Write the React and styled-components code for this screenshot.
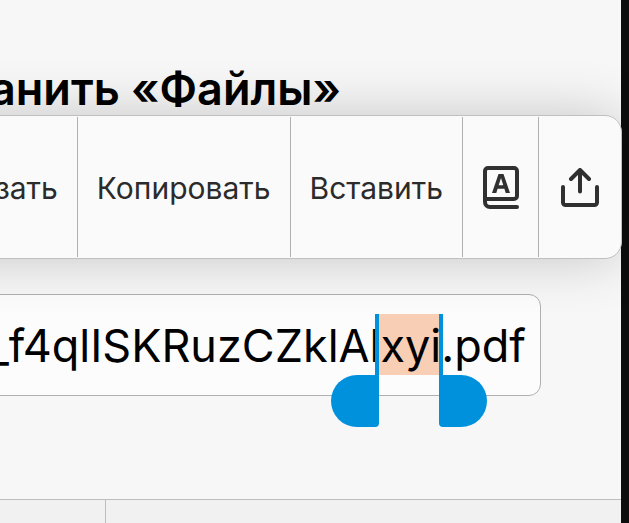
import { useEffect, useRef } from 'react';
import styled, { createGlobalStyle } from 'styled-components';

const GlobalStyle = createGlobalStyle`
  * {
    box-sizing: border-box;
  }

  body {
    margin: 0;
    background-color: #0d0d0d;
    font-family: 'Inter', 'Liberation Sans', sans-serif;
    overflow: hidden;
  }
`;

const Screen = styled.div`
  position: relative;
  min-height: 100vh;
  padding-right: 8px;
  display: flex;
  overflow: hidden;
`;

const Dialog = styled.main`
  flex: 1;
  min-width: 0;
  display: flex;
  flex-direction: column;
  overflow: hidden;
  background-color: #f7f7f7;
`;

const Content = styled.div`
  flex: 1;
  display: flex;
  flex-direction: column;
  align-items: flex-end;
  gap: 176px;
  padding: 60px 80px 0 0;
`;

const Title = styled.h1`
  margin: 0;
  padding-right: 200px;
  font-size: 45px;
  line-height: 58px;
  font-weight: 600;
  color: #000000;
  white-space: nowrap;
`;

const Field = styled.div`
  position: relative;
  width: calc(100% + 80px);
  border: 1px solid #b0b0b0;
  border-radius: 12px;
  background-color: #fcfcfc;
`;

const FileName = styled.input`
  position: relative;
  display: block;
  width: 100%;
  height: 100px;
  padding: 20px 14px;
  border: none;
  outline: none;
  background: none;
  font-family: inherit;
  font-size: 45px;
  line-height: 60px;
  text-align: right;
  color: #000000;
  caret-color: transparent;

  &::selection {
    background-color: transparent;
    color: #000000;
  }
`;

const Highlight = styled.span`
  position: absolute;
  top: 19px;
  right: 101px;
  width: 60px;
  height: 61px;
  background-color: #f8ceb5;
`;

const Handle = styled.span`
  position: absolute;
  top: 19px;
  right: ${({ $side }) => ($side === 'start' ? '161px' : '53px')};
  width: 48px;
  height: 113px;
  display: flex;
  flex-direction: column;
  align-items: ${({ $side }) => ($side === 'start' ? 'flex-end' : 'flex-start')};

  &::before {
    content: '';
    width: 4px;
    height: 61px;
    background-color: #0091dd;
  }

  &::after {
    content: '';
    width: 48px;
    height: 52px;
    border-radius: ${({ $side }) =>
      $side === 'start' ? '26px 0 4px 26px' : '0 26px 26px 4px'};
    background-color: #0091dd;
  }
`;

const Footer = styled.footer`
  display: flex;
  height: 24px;
  border-top: 1px solid #bdbdbd;
  background-color: #f1f1f1;
`;

const FooterCell = styled.div`
  width: 106px;
  border-right: 1px solid #bdbdbd;
`;

const Menu = styled.div`
  position: absolute;
  top: 115px;
  right: 7px;
  z-index: 1;
  display: flex;
  padding: 1px 0;
  height: 144px;
  border: 1px solid #c0c0c0;
  border-radius: 17px;
  background-color: #fafafa;
  box-shadow: 0 0 56px rgba(0, 0, 0, 0.2);
`;

const MenuButton = styled.button`
  display: flex;
  align-items: center;
  justify-content: center;
  padding: 2px 19px 0;
  border: none;
  border-left: 1px solid #b0b0b0;
  background: none;
  font-family: inherit;
  font-size: 30px;
  line-height: 40px;
  color: #2b2b2b;
  white-space: nowrap;
`;

const IconButton = styled(MenuButton)`
  width: ${({ $width }) => $width};
  padding: 0;
`;

const Icon = styled.svg`
  flex: none;
  display: block;
`;

function DictionaryIcon() {
  return (
    <Icon width="36" height="43" viewBox="0 0 36 43" fill="none" stroke="#303030" strokeWidth="4" strokeLinecap="round" strokeLinejoin="round">
      <path d="M2 33V5a3 3 0 0 1 3-3H31a3 3 0 0 1 3 3V30a3 3 0 0 1-3 3H2v3a5 5 0 0 0 5 5H34" />
      <path d="M9 27 15.500 8h5L27 27h-4.300l-1.300-4.200h-6.800L13.300 27Z M15.700 19.300h4.600L18 12Z" fill="#303030" fillRule="evenodd" stroke="none" />
    </Icon>
  );
}

function ShareIcon() {
  return (
    <Icon width="38" height="39" viewBox="0 0 38 39" fill="none" stroke="#303030" strokeWidth="4" strokeLinecap="round" strokeLinejoin="round">
      <path d="M2 19V34.500a2.500 2.500 0 0 0 2.500 2.500H33.500a2.500 2.500 0 0 0 2.500-2.500V19" />
      <path d="M19 23.500V2.500M10 11 19 2l9 9" />
    </Icon>
  );
}

const fileName = '_f4qlISKRuzCZklAlxyi.pdf';
const selected = 'xyi';

function App() {
  const input = useRef(null);

  useEffect(() => {
    const start = fileName.indexOf(selected);
    input.current.focus();
    input.current.setSelectionRange(start, start + selected.length);
  }, []);

  return (
    <Screen>
      <GlobalStyle />
      <Dialog>
        <Content>
          <Title>Сохранить «Файлы»</Title>
          <Field>
            <Highlight />
            <FileName ref={input} type="text" aria-label="Имя файла" defaultValue={fileName} />
            <Handle $side="start" />
            <Handle $side="end" />
          </Field>
        </Content>
        <Footer>
          <FooterCell />
        </Footer>
      </Dialog>
      <Menu role="toolbar">
        <MenuButton type="button">Вырезать</MenuButton>
        <MenuButton type="button">Копировать</MenuButton>
        <MenuButton type="button">Вставить</MenuButton>
        <IconButton type="button" aria-label="Словарь" $width="76px">
          <DictionaryIcon />
        </IconButton>
        <IconButton type="button" aria-label="Поделиться" $width="83px">
          <ShareIcon />
        </IconButton>
      </Menu>
    </Screen>
  );
}

export default App;
